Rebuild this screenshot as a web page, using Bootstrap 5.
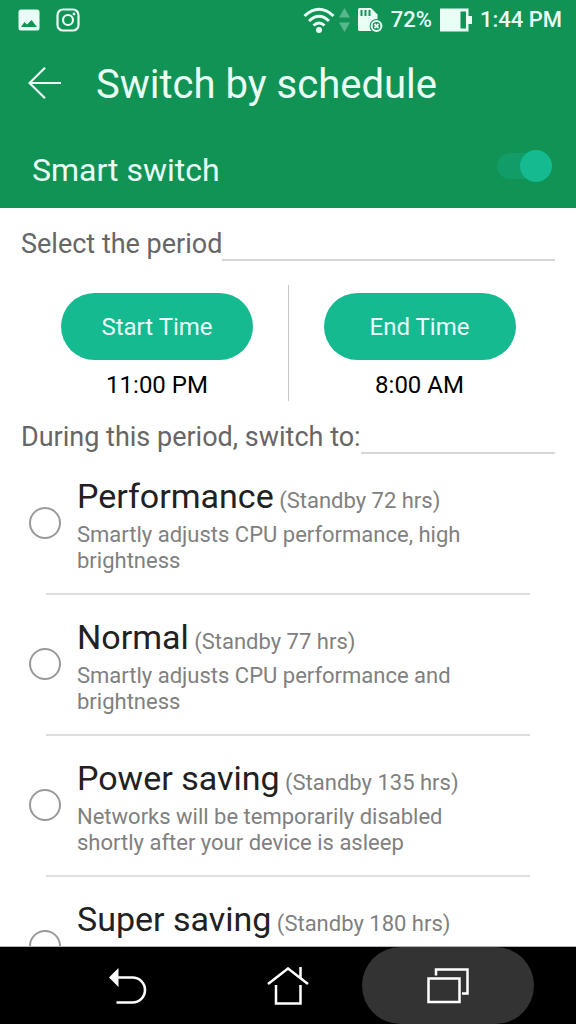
<!DOCTYPE html>
<html lang="en">
<head>
<meta charset="utf-8">
<meta name="viewport" content="width=device-width, initial-scale=1">
<title>Switch by schedule</title>
<link href="https://cdn.jsdelivr.net/npm/bootstrap@5.3.0/dist/css/bootstrap.min.css" rel="stylesheet">
<style>
  body { font-family: Roboto, "Liberation Sans", sans-serif; color: #212121; background: #fff; }
  svg { display: block; flex: none; }
  .app-top { background: #119356; color: #e9fff5; }
  .status-bar { height: 40px; padding: 0 14px 0 18px; font-size: 22px; line-height: 40px; font-weight: 500; }
  .title-bar { height: 88px; padding: 2px 28px 0; gap: 34px; }
  .title-bar h1 { font-size: 40px; line-height: 48px; font-weight: 400; }
  .smart-row { height: 80px; padding: 0 24px 4px 32px; }
  .smart-row label { font-size: 32px; line-height: 40px; padding-top: 8px; }
  .smart-toggle { appearance: none; width: 55px; height: 32px; margin: 0; border: 0; display: flex; align-items: center; position: relative; background: none; }
  .smart-toggle::before { content: ""; width: 44px; height: 26px; border-radius: 13px; background: #119c68; }
  .smart-toggle::after { content: ""; position: absolute; right: 0; width: 32px; height: 32px; border-radius: 50%; background: #15ba91; }
  .app-main { min-height: 0; padding-top: 20px; border-bottom: 1px solid #b4b4b4; }
  .section-head { padding: 0 21px; }
  .section-head h2 { font-size: 27px; line-height: 33px; font-weight: 400; color: #666; }
  .section-head span { border-bottom: 2px solid #d6d6d6; }
  .times { padding: 24px 26px 20px; }
  .time-cell { padding-top: 8px; gap: 9px; font-size: 24px; line-height: 32px; color: #000; }
  .time-cell + .time-cell { border-left: 1px solid #c8c8c8; }
  .btn-time { --bs-btn-color: #e9fff8; --bs-btn-bg: #15ba91; --bs-btn-hover-color: #fff; --bs-btn-hover-bg: #12a884; --bs-btn-active-bg: #12a884; width: 192px; height: 67px; border: 0; font-size: 24px; }
  .mode { min-height: 139px; padding: 21px 76px 0 77px; position: relative; }
  .mode-radio { appearance: none; position: absolute; left: 29px; top: 53px; width: 32px; height: 32px; margin: 0; border: 2px solid #999; border-radius: 50%; background: #fff; }
  .mode-radio:checked { border: 9px solid #15ba91; }
  .mode-name { font-size: 34px; line-height: 42px; }
  .mode-note { font-size: 22px; color: #808080; }
  .mode-text { font-size: 22px; line-height: 26px; color: #808080; margin-top: 5px; }
  .mode-rule { margin: 0 46px; border-top: 2px solid #dedede; opacity: 1; }
  .nav-keys { height: 77px; background: #000; padding: 0 48px; }
  .nav-key { flex: 1; margin: 0 -6px; background: none; border: 0; border-radius: 39px; padding: 0; }
  .nav-key.active { background: #333; }
</style>
</head>
<body class="vh-100 d-flex flex-column overflow-hidden">

<header class="app-top flex-shrink-0">
  <div class="status-bar d-flex align-items-center">
    <svg width="22" height="22" viewBox="0 0 22 22" aria-hidden="true"><rect x=".5" y=".5" width="21" height="21" rx="2.500" fill="#e9fff5"/><path d="M3 18l3.500-5 2.500 2.500L13.500 11l5.500 7z" fill="#119356"/></svg>
    <svg class="ms-3" width="24" height="24" viewBox="0 0 24 24" fill="none" stroke="#e9fff5" stroke-width="2.200" aria-hidden="true"><rect x="1.500" y="1.500" width="21" height="21" rx="5.500"/><circle cx="12" cy="12" r="5"/><circle cx="18" cy="6" r="1.400" fill="#e9fff5" stroke="none"/></svg>
    <div class="ms-auto d-flex align-items-center gap-2">
      <div class="d-flex align-items-center gap-1">
        <svg width="32" height="27" viewBox="0 0 32 27" fill="none" stroke="#e9fff5" stroke-width="3" aria-hidden="true"><path d="M1.500 9Q16-4.500 30.500 9M6 14Q16 4.500 26 14M10.500 18.500Q16 13.500 21.500 18.500"/><circle cx="16" cy="23" r="3" fill="#e9fff5" stroke="none"/></svg>
        <svg width="11" height="26" viewBox="0 0 11 26" fill="#58b78c" aria-hidden="true"><path d="M5.500 1L11 10.500H0zM0 15.500h11L5.500 25z"/></svg>
      </div>
      <svg width="25" height="26" viewBox="0 0 25 26" aria-hidden="true"><path d="M0 2.500Q0 1 1.500 1H13l6.500 6.500V24H1.500Q0 24 0 22.500z" fill="#e9fff5"/><path d="M3.500 3v6M7.500 3v6M11.500 3v6" stroke="#119356" stroke-width="2"/><circle cx="18.500" cy="19" r="6.900" fill="#119356"/><circle cx="18.500" cy="19" r="4.900" fill="none" stroke="#e9fff5" stroke-width="2"/><path d="M16.500 17l4 4m0-4l-4 4" stroke="#e9fff5" stroke-width="1.800"/></svg>
      <span>72%</span>
      <svg width="32" height="24" viewBox="0 0 32 24" fill="#e9fff5" aria-hidden="true"><path d="M0 .5h28.500V8H32v8h-3.500v7.500H0zM20.500 3.500v17h5.500v-17z" fill-rule="evenodd"/></svg>
      <span>1:44 PM</span>
    </div>
  </div>
  <div class="title-bar d-flex align-items-center">
    <button type="button" class="btn p-0 pb-1 border-0" aria-label="Back">
      <svg width="34" height="32" viewBox="0 0 34 32" fill="none" stroke="#e9fff5" stroke-width="2.200" aria-hidden="true"><path d="M33 16H1.500M17 .8L1.500 16 17 31.200"/></svg>
    </button>
    <h1 class="mb-0">Switch by schedule</h1>
  </div>
  <div class="smart-row d-flex align-items-center justify-content-between">
    <label for="smart">Smart switch</label>
    <input class="smart-toggle" type="checkbox" role="switch" id="smart" checked>
  </div>
</header>

<main class="app-main flex-grow-1 overflow-hidden">
  <div class="section-head d-flex">
    <h2 class="mb-0">Select the period</h2><span class="flex-grow-1"></span>
  </div>
  <div class="times d-flex">
    <div class="time-cell w-50 d-flex flex-column align-items-center">
      <button type="button" class="btn btn-time rounded-pill">Start Time</button>
      <span>11:00 PM</span>
    </div>
    <div class="time-cell w-50 d-flex flex-column align-items-center">
      <button type="button" class="btn btn-time rounded-pill">End Time</button>
      <span>8:00 AM</span>
    </div>
  </div>
  <div class="section-head d-flex">
    <h2 class="mb-0">During this period, switch to:</h2><span class="flex-grow-1"></span>
  </div>

  <div class="mode">
    <input class="mode-radio" type="radio" name="mode" id="m1">
    <label class="d-block" for="m1"><span class="mode-name">Performance</span><span class="mode-note"> (Standby 72 hrs)</span>
      <span class="mode-text d-block">Smartly adjusts CPU performance, high brightness</span></label>
  </div>
  <hr class="mode-rule">
  <div class="mode">
    <input class="mode-radio" type="radio" name="mode" id="m2">
    <label class="d-block" for="m2"><span class="mode-name">Normal</span><span class="mode-note"> (Standby 77 hrs)</span>
      <span class="mode-text d-block">Smartly adjusts CPU performance and brightness</span></label>
  </div>
  <hr class="mode-rule">
  <div class="mode">
    <input class="mode-radio" type="radio" name="mode" id="m3">
    <label class="d-block" for="m3"><span class="mode-name">Power saving</span><span class="mode-note"> (Standby 135 hrs)</span>
      <span class="mode-text d-block">Networks will be temporarily disabled shortly after your device is asleep</span></label>
  </div>
  <hr class="mode-rule">
  <div class="mode">
    <input class="mode-radio" type="radio" name="mode" id="m4">
    <label class="d-block" for="m4"><span class="mode-name">Super saving</span><span class="mode-note"> (Standby 180 hrs)</span></label>
  </div>
</main>

<nav class="nav-keys d-flex flex-shrink-0" aria-label="System keys">
  <button type="button" class="nav-key d-flex align-items-center justify-content-center" aria-label="Back">
    <svg width="38" height="36" viewBox="0 0 38 36" aria-hidden="true"><path d="M0 9.500L9.500 0v19z" fill="#fff"/><path d="M8 9.500H23.500a12.500 12.500 0 0 1 0 25H7.500" fill="none" stroke="#fff" stroke-width="2.600"/></svg>
  </button>
  <button type="button" class="nav-key d-flex align-items-center justify-content-center" aria-label="Home">
    <svg width="42" height="38" viewBox="0 0 42 38" fill="none" stroke="#fff" stroke-width="2.500" aria-hidden="true"><path d="M1 17L21 1.500 41 17M33.500 0v11M9 18v18.500h24.500V18"/></svg>
  </button>
  <button type="button" class="nav-key active d-flex align-items-center justify-content-center" aria-label="Recent apps">
    <svg width="42" height="36" viewBox="0 0 42 36" fill="none" stroke="#fff" stroke-width="2.500" aria-hidden="true"><path d="M1.500 10.500h31V34h-31zM9 7.500v-6h31.500v24H35"/></svg>
  </button>
</nav>

<script src="https://cdn.jsdelivr.net/npm/bootstrap@5.3.0/dist/js/bootstrap.bundle.min.js"></script>
</body>
</html>
